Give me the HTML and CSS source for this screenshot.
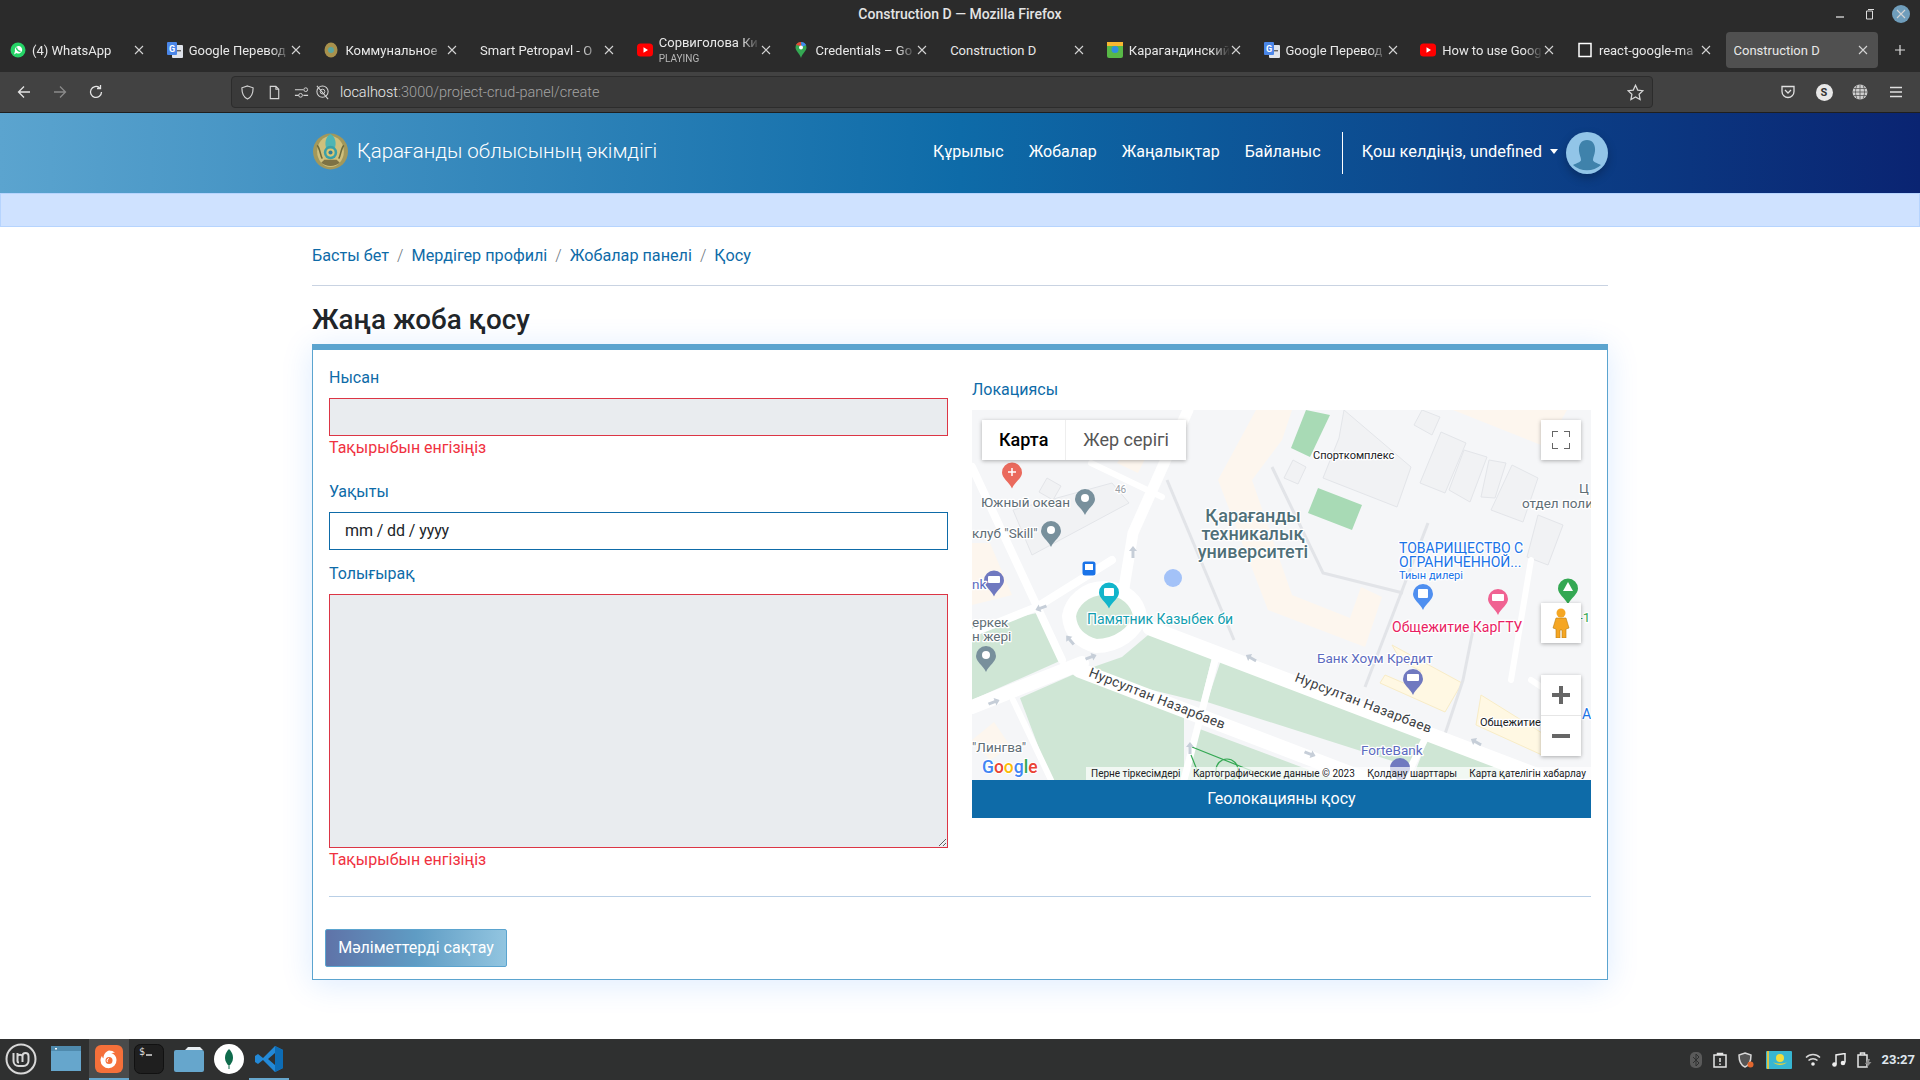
FILE: index.html
```html
<!DOCTYPE html>
<html lang="kk">
<head>
  <meta charset="UTF-8" />
  <title>Construction D</title>
  <link rel="stylesheet" href="styles.css">
</head>
<body>
  <svg class="defs" width="0" height="0">
    <defs>
      <symbol id="x" viewBox="0 0 12 12"><path d="M2 2l8 8M10 2l-8 8" stroke="#d4d4d4" stroke-width="1.1" fill="none"/></symbol>
      <symbol id="gt" viewBox="0 0 16 16"><rect x="5" y="3" width="11" height="13" rx="1" fill="#dfe3ea"/><rect x="0" y="0" width="10" height="13" rx="1" fill="#4a86e8"/><text x="2" y="10" class="fav-letter">G</text><rect x="10" y="8" width="4" height="1.4" fill="#666"/></symbol>
      <symbol id="yt" viewBox="0 0 16 16"><rect y="1.500" width="16" height="13" rx="3.500" fill="#f00"/><path d="M6.500 5.200l4.500 2.800-4.500 2.800z" fill="#fff"/></symbol>
      <symbol id="pin" viewBox="0 0 20 26"><path d="M10 0a10 10 0 0 1 10 10c0 6-7 9-10 16C7 19 0 16 0 10A10 10 0 0 1 10 0z"/></symbol>
      <symbol id="arrow" viewBox="0 0 12 12"><path d="M6 0l4 5H7.500v7h-3V5H2z" fill="#c6ced8"/></symbol>
    </defs>
  </svg>

  <div class="window">
    <div class="titlebar">
      <span class="titlebar-text">Construction D — Mozilla Firefox</span>
      <div class="window-controls">
        <svg width="12" height="12" viewBox="0 0 12 12"><path d="M2 9h8" stroke="#ddd" stroke-width="1.300"/></svg>
        <svg width="12" height="12" viewBox="0 0 12 12"><path d="M3.500 3h6v8h-6zM5 1.500h6" stroke="#ddd" fill="none"/></svg>
        <span class="close-circle"><svg width="12" height="12"><use href="#x"/></svg></span>
      </div>
    </div>

    <div class="tabbar">
      <div class="tab">
        <svg class="fav" viewBox="0 0 16 16"><circle cx="8" cy="8" r="7.500" fill="#25d366"/><path d="M4 12.500l1-3.500a3.700 3.700 0 1 1 1.500 1.900z" fill="#fff"/><path d="M6.500 5.500c0 2 2 4 4 4" stroke="#25d366" stroke-width="1.500" fill="none"/></svg>
        <span class="tab-title">(4) WhatsApp</span>
        <svg class="tab-x"><use href="#x"/></svg>
      </div>
      <div class="tab">
        <svg class="fav"><use href="#gt"/></svg>
        <span class="tab-title">Google Перевод</span>
        <svg class="tab-x"><use href="#x"/></svg>
      </div>
      <div class="tab">
        <svg class="fav" viewBox="0 0 16 16"><ellipse cx="8" cy="8" rx="6.500" ry="7.500" fill="#a8914c"/><circle cx="8" cy="8" r="3" fill="#5ba59f"/></svg>
        <span class="tab-title">Коммунальное</span>
        <svg class="tab-x"><use href="#x"/></svg>
      </div>
      <div class="tab">
        <span class="tab-title">Smart Petropavl - O</span>
        <svg class="tab-x"><use href="#x"/></svg>
      </div>
      <div class="tab">
        <svg class="fav"><use href="#yt"/></svg>
        <span class="tab-title tab-stack">Сорвиголова Ки<small>PLAYING</small></span>
        <svg class="tab-x"><use href="#x"/></svg>
      </div>
      <div class="tab">
        <svg class="fav" viewBox="0 0 16 16"><path d="M8 0a5.500 5.500 0 0 1 5.500 5.500C13.500 9 9.500 11 8 16 6.500 11 2.500 9 2.500 5.500A5.500 5.500 0 0 1 8 0z" fill="#34a853"/><path d="M3 3a5.500 5.500 0 0 1 5-3v4z" fill="#ea4335"/><path d="M8 0a5.500 5.500 0 0 1 5 3l-4 2z" fill="#4285f4"/><circle cx="8" cy="5.500" r="2" fill="#fff"/></svg>
        <span class="tab-title">Credentials – Go</span>
        <svg class="tab-x"><use href="#x"/></svg>
      </div>
      <div class="tab">
        <span class="tab-title no-fade">Construction D</span>
        <svg class="tab-x"><use href="#x"/></svg>
      </div>
      <div class="tab">
        <svg class="fav" viewBox="0 0 16 16"><rect width="16" height="16" rx="2" fill="#58b947"/><rect width="16" height="4" fill="#f7b731"/><circle cx="8" cy="7.500" r="3.500" fill="#2f8fe0"/></svg>
        <span class="tab-title">Карагандинский</span>
        <svg class="tab-x"><use href="#x"/></svg>
      </div>
      <div class="tab">
        <svg class="fav"><use href="#gt"/></svg>
        <span class="tab-title">Google Перевод</span>
        <svg class="tab-x"><use href="#x"/></svg>
      </div>
      <div class="tab">
        <svg class="fav"><use href="#yt"/></svg>
        <span class="tab-title">How to use Goog</span>
        <svg class="tab-x"><use href="#x"/></svg>
      </div>
      <div class="tab">
        <svg class="fav" viewBox="0 0 16 16"><rect x="2" y="1.500" width="12" height="13" fill="none" stroke="#fff" stroke-width="1.500"/></svg>
        <span class="tab-title">react-google-ma</span>
        <svg class="tab-x"><use href="#x"/></svg>
      </div>
      <div class="tab tab-active">
        <span class="tab-title no-fade">Construction D</span>
        <svg class="tab-x"><use href="#x"/></svg>
      </div>
      <svg class="tab-plus" viewBox="0 0 12 12"><path d="M6 1v10M1 6h10" stroke="#ddd" stroke-width="1.200"/></svg>
    </div>

    <div class="toolbar">
      <span class="tool"><svg viewBox="0 0 16 16"><path d="M14 8H2.500M8 2.500L2.500 8 8 13.500" stroke="#e4e4e4" stroke-width="1.300" fill="none"/></svg></span>
      <span class="tool tool-dim"><svg viewBox="0 0 16 16"><path d="M2 8h11.500M8 2.500L13.500 8 8 13.500" stroke="#8a8a8a" stroke-width="1.300" fill="none"/></svg></span>
      <span class="tool"><svg viewBox="0 0 16 16"><path d="M13.500 8A5.500 5.500 0 1 1 11.500 3.700M12.500 1v3.500H9" stroke="#e4e4e4" stroke-width="1.300" fill="none"/></svg></span>
      <div class="urlbar">
        <svg class="url-icon" viewBox="0 0 16 16"><path d="M8 1l6 2c0 6-1.500 10-6 12C3.500 13 2 9 2 3z" stroke="#d6d6d6" stroke-width="1.200" fill="none"/></svg>
        <svg class="url-icon" viewBox="0 0 16 16"><path d="M3.500 1.500h6l3 3v10h-9zM9.500 1.500v3h3" stroke="#d6d6d6" stroke-width="1.200" fill="none"/></svg>
        <svg class="url-icon" viewBox="0 0 16 16"><path d="M1 5h9M1 11h4M10 11h5" stroke="#d6d6d6" stroke-width="1.200"/><circle cx="12.500" cy="5" r="2" stroke="#d6d6d6" fill="none"/><circle cx="7" cy="11" r="2" stroke="#d6d6d6" fill="none"/></svg>
        <svg class="url-icon url-icon-tight" viewBox="0 0 16 16"><circle cx="8" cy="7" r="6" stroke="#d6d6d6" stroke-width="1.100" fill="none"/><circle cx="8" cy="7" r="2.500" stroke="#d6d6d6" fill="none"/><path d="M2 1l12 14" stroke="#d6d6d6" stroke-width="1.100"/></svg>
        <span class="url-text"><b>localhost</b>:3000/project-crud-panel/create</span>
        <svg class="url-star" viewBox="0 0 16 16"><path d="M8 1.200l2.100 4.500 4.900.6-3.600 3.400.9 4.900L8 12.200l-4.300 2.400.9-4.900L1 6.300l4.900-.6z" stroke="#d6d6d6" stroke-width="1.200" fill="none"/></svg>
      </div>
      <span class="tool"><svg viewBox="0 0 16 16"><path d="M2 2.500h12v5a6 6 0 0 1-12 0z" stroke="#e0e0e0" stroke-width="1.300" fill="none"/><path d="M5 6l3 3 3-3" stroke="#e0e0e0" stroke-width="1.300" fill="none"/></svg></span>
      <span class="tool"><span class="s-badge">S</span></span>
      <span class="tool"><svg viewBox="0 0 16 16"><circle cx="8" cy="8" r="7.500" fill="#cfcfcf"/><path d="M8 .5v15M.5 8h15M1.500 4.500h13M1.500 11.500h13M5 1.500c-2 4-2 9 0 13M11 1.500c2 4 2 9 0 13" stroke="#555" fill="none" stroke-width=".8"/></svg></span>
      <span class="tool"><svg viewBox="0 0 16 16"><path d="M2 3.500h12M2 8h12M2 12.500h12" stroke="#e0e0e0" stroke-width="1.300"/></svg></span>
    </div>

    <main class="page">
      <header class="site-header">
        <div class="container header-row">
          <div class="brand">
            <svg class="emblem" viewBox="0 0 36 36">
              <ellipse cx="18" cy="18" rx="17" ry="17.500" fill="#a3985a"/>
              <ellipse cx="18" cy="18" rx="13" ry="15" fill="#cfc07c"/>
              <path d="M18 1c5 3 6 9 4 14h-8C12 10 13 4 18 1z" fill="#4fb5b4"/>
              <circle cx="18" cy="19" r="6.500" fill="#3aa0a8"/>
              <circle cx="18" cy="19" r="4" fill="#d9c673"/>
              <circle cx="18" cy="19" r="2" fill="#2f7f9e"/>
              <path d="M9 29c4 4 14 4 18 0l-3-3H12z" fill="#7d7244"/>
              <path d="M5 12c3 3 3 10 5 13M31 12c-3 3-3 10-5 13" stroke="#6d6a3c" stroke-width="1.500" fill="none"/>
            </svg>
            <span class="brand-name">Қарағанды облысының әкімдігі</span>
          </div>
          <nav class="site-nav">
            <a>Құрылыс</a>
            <a>Жобалар</a>
            <a>Жаңалықтар</a>
            <a>Байланыс</a>
            <span class="nav-divider"></span>
            <a class="nav-user">Қош келдіңіз, undefined</a>
            <span class="caret"></span>
            <span class="avatar">
              <svg viewBox="0 0 42 42"><circle cx="21" cy="21" r="21" fill="#92c5e8"/><path d="M21 8c6 0 8.500 5 8 11-.4 4-2 6-2 9 0 2 4 3 8 5a21 21 0 0 1-28 0c4-2 8-3 8-5 0-3-1.600-5-2-9-.5-6 2-11 8-11z" fill="#3f82ab"/></svg>
            </span>
          </nav>
        </div>
      </header>
      <div class="alert-band"></div>

      <div class="container">
        <div class="breadcrumb">
          <a>Басты бет</a><span class="sep">/</span>
          <a>Мердігер профилі</a><span class="sep">/</span>
          <a>Жобалар панелі</a><span class="sep">/</span>
          <a>Қосу</a>
        </div>
        <h1 class="page-title">Жаңа жоба қосу</h1>

        <section class="card">
          <div class="card-grid">
            <div class="col-form">
              <div class="field field-error">
                <label class="field-label">Нысан</label>
                <input class="control control-invalid" type="text" readonly>
                <p class="error-text">Тақырыбын енгізіңіз</p>
              </div>
              <div class="field">
                <label class="field-label">Уақыты</label>
                <input class="control control-date" type="text" value="mm / dd / yyyy" readonly>
              </div>
              <div class="field-last">
                <label class="field-label">Толығырақ</label>
                <textarea class="control control-invalid control-area" readonly></textarea>
                <p class="error-text">Тақырыбын енгізіңіз</p>
              </div>
            </div>

            <div class="col-map">
              <label class="field-label">Локациясы</label>
              <div class="map">
                <svg class="map-canvas" viewBox="0 0 619 370">
                  <rect width="619" height="370" fill="#f5f6f8"/>
                  <!-- blocks -->
                  <g fill="#fdf6ee">
                    <path d="M284 0L246 70l50 130 97 37 17-50-21-10-11 31-58-23-40-115 30-40 10-30z"/>
                    <path d="M481 0l93 37 21-37z"/>
                    <path d="M145 53l21 10 8-16-20-7z"/>
                    <path d="M0 133h18l22 52-40 10z"/>
                    <path d="M0 330l22-18 17 25-21 13z"/>
                  </g>
                  <g fill="#fff8e3" stroke="#f8ecc6">
                    <path d="M420 235l70 38-17 29-65-29 5-8 28 12 8-16-20-10z"/>
                    <path d="M509 285l61 38v22l-66-30z"/>
                  </g>
                  <g fill="#f1f2f4" stroke="#e3e5e9">
                    <path d="M372 0l67 57-14 40-74-29 16-40z"/>
                    <path d="M469 22l-21 51 25 10 21-50z"/>
                    <path d="M492 40l-15 40 21 12 17-45z"/>
                    <path d="M517 50l-8 37 14 1 11-35z"/>
                    <path d="M540 55l-21 45 32 12 15-44z"/>
                    <path d="M566 105l-11 42 21 8 15-40z"/>
                    <path d="M41 100l19 45 97-52-17-20z"/>
                    <path d="M321 50l-9 18 14 6 8-17z"/>
                    <path d="M75 68l-8 14 14 8 8-14z"/>
                    <path d="M450 0l-8 15 18 10 8-18z"/>
                  </g>
                  <g fill="none" stroke="#e2e4e8" stroke-width="3">
                    <path d="M195 70l67 160"/>
                    <path d="M300 57l51 106 80 20"/>
                    <path d="M456 113l-63 164"/>
                    <path d="M501 220l-10 50-20 60"/>
                  </g>
                  <!-- parks -->
                  <g fill="#cfe6d5">
                    <path d="M0 217l65-14 25 47-90 40z"/>
                    <path d="M182 220l59 23-12 49-122-30 43-15z"/>
                    <path d="M250 247l202 76-13 34-204-65z"/>
                    <path d="M48 288l59-26 105 38v70H79z"/>
                    <path d="M225 318l139 52H215z"/>
                    <path d="M458 323l112 44-130 3z"/>
                  </g>
                  <g fill="#a8dab5">
                    <path d="M334 0l24 5-20 42-19-9z"/>
                    <path d="M346 78l44 17-10 25-44-17z"/>
                  </g>
                  <!-- roads -->
                  <g fill="none" stroke="#fff" stroke-linecap="round">
                    <path d="M216 0L161 123l-11 67" stroke-width="11"/>
                    <path d="M178 218L590 375" stroke-width="15"/>
                    <path d="M107 260L400 372" stroke-width="15"/>
                    <path d="M0 297L110 253" stroke-width="14"/>
                    <path d="M0 223l65-26 75-47" stroke-width="8"/>
                    <path d="M0 57l90 193" stroke-width="8"/>
                    <path d="M245 243l-33 127" stroke-width="7"/>
                    <path d="M456 323l-17 34" stroke-width="7"/>
                    <path d="M41 290l38 80" stroke-width="6"/>
                    <path d="M119 53l71 34" stroke-width="6"/>
                    <path d="M559 150l-20 120" stroke-width="6"/>
                    <path d="M559 270l30 20" stroke-width="6"/>
                  </g>
                  <path d="M132 178c22 0 34 14 36 28-4 16-22 30-44 30-16-4-26-14-27-30 2-14 16-28 35-28z" fill="#cfe6d5" stroke="#fff" stroke-width="14"/>
                  <g fill="none" stroke="#34a853" stroke-width="1.200">
                    <path d="M220 337l60 24M219 345l10 25"/>
                    <circle cx="255" cy="360" r="11"/>
                  </g>
                  <!-- arrows -->
                  <use href="#arrow" x="155" y="136" width="12" height="12"/>
                  <use href="#arrow" x="63" y="192" width="12" height="12" transform="rotate(-110 69 198)"/>
                  <use href="#arrow" x="92" y="224" width="12" height="12" transform="rotate(-40 98 230)"/>
                  <use href="#arrow" x="113" y="241" width="12" height="12" transform="rotate(70 119 247)"/>
                  <use href="#arrow" x="273" y="242" width="12" height="12" transform="rotate(-60 279 248)"/>
                  <use href="#arrow" x="332" y="338" width="12" height="12" transform="rotate(110 338 344)"/>
                  <use href="#arrow" x="498" y="326" width="12" height="12" transform="rotate(-60 504 332)"/>
                  <use href="#arrow" x="212" y="332" width="12" height="12"/>
                  <use href="#arrow" x="16" y="286" width="12" height="12" transform="rotate(70 22 292)"/>
                  <!-- pins -->
                  <g class="pin-red"><use href="#pin" x="30" y="52" width="20" height="27"/></g>
                  <path d="M36 62h8M40 58v8" stroke="#fff" stroke-width="1.500"/>
                  <g class="pin-grey">
                    <use href="#pin" x="103" y="78" width="20" height="28"/>
                    <use href="#pin" x="69" y="110" width="20" height="28"/>
                    <use href="#pin" x="4" y="235" width="20" height="28"/>
                  </g>
                  <g class="pin-purple">
                    <use href="#pin" x="12" y="160" width="20" height="27"/>
                    <use href="#pin" x="431" y="258" width="20" height="28"/>
                    <use href="#pin" x="418" y="347" width="20" height="28"/>
                  </g>
                  <g class="pin-teal"><use href="#pin" x="127" y="172" width="20" height="27"/></g>
                  <g class="pin-blue"><use href="#pin" x="441" y="173" width="20" height="28"/></g>
                  <g class="pin-pink"><use href="#pin" x="516" y="178" width="20" height="28"/></g>
                  <g class="pin-green"><use href="#pin" x="586" y="168" width="20" height="27"/></g>
                  <g fill="#fff">
                    <circle cx="113" cy="88" r="4"/>
                    <circle cx="79" cy="120" r="4"/>
                    <circle cx="14" cy="245" r="4"/>
                    <rect x="132" y="178" width="10" height="8" rx="1"/>
                    <rect x="446" y="179" width="10" height="9" rx="1"/>
                    <rect x="520" y="184" width="12" height="7" rx="1"/>
                    <path d="M596 172l5 9h-10z"/>
                    <rect x="16" y="166" width="12" height="7" rx="1"/>
                    <rect x="435" y="264" width="12" height="7" rx="1"/>
                  </g>
                  <rect x="110.500" y="151.500" width="13" height="14" rx="2.500" fill="#1a73e8"/>
                  <rect x="113" y="154" width="8" height="6" fill="#fff"/>
                  <circle cx="201" cy="168" r="9" fill="#a3c2f8"/>
                  <!-- labels -->
                  <g class="map-label">
                    <text x="341" y="49" class="lbl-black">Спорткомплекс</text>
                    <text x="143" y="83" class="lbl-num">46</text>
                    <text x="9" y="97" class="lbl-grey">Южный океан</text>
                    <text x="0" y="128" class="lbl-grey">клуб "Skill"</text>
                    <text x="0" y="217" class="lbl-grey">еркек</text>
                    <text x="0" y="231" class="lbl-grey">н жері</text>
                    <text x="0" y="342" class="lbl-grey">"Лингва"</text>
                    <text x="607" y="83" class="lbl-grey">Ц</text>
                    <text x="550" y="98" class="lbl-grey">отдел поли</text>
                    <text x="0" y="179" class="lbl-purple">nk</text>
                    <text x="281" y="112" class="lbl-big">Қарағанды</text>
                    <text x="281" y="130" class="lbl-big">техникалық</text>
                    <text x="281" y="148" class="lbl-big">университеті</text>
                    <text x="427" y="143" class="lbl-blue">ТОВАРИЩЕСТВО С</text>
                    <text x="427" y="157" class="lbl-blue">ОГРАНИЧЕННОЙ...</text>
                    <text x="427" y="169" class="lbl-blue-sm">Тиын дилері</text>
                    <text x="420" y="222" class="lbl-pink">Общежитие КарГТУ</text>
                    <text x="115" y="214" class="lbl-teal">Памятник Казыбек би</text>
                    <text x="345" y="253" class="lbl-purple">Банк Хоум Кредит</text>
                    <text x="389" y="345" class="lbl-purple">ForteBank</text>
                    <text x="607" y="212" class="lbl-green">-1</text>
                    <text x="610" y="309" class="lbl-blue">А</text>
                    <text x="508" y="316" class="lbl-black">Общежитие</text>
                    <text class="lbl-road" transform="translate(116 266) rotate(21.500)">Нурсултан Назарбаев</text>
                    <text class="lbl-road" transform="translate(322 271) rotate(21)">Нурсултан Назарбаев</text>
                  </g>
                  <text x="10" y="363" class="g-logo"><tspan fill="#4285f4">G</tspan><tspan fill="#ea4335">o</tspan><tspan fill="#fbbc05">o</tspan><tspan fill="#4285f4">g</tspan><tspan fill="#34a853">l</tspan><tspan fill="#ea4335">e</tspan></text>
                </svg>

                <div class="map-type">
                  <span class="map-type-btn map-type-on">Карта</span>
                  <span class="map-type-btn">Жер серігі</span>
                </div>
                <span class="map-btn map-full">
                  <svg width="18" height="18" viewBox="0 0 18 18"><path d="M0 6V0h6M12 0h6v6M18 12v6h-6M6 18H0v-6" stroke="#666" stroke-width="2" fill="none"/></svg>
                </span>
                <span class="map-btn map-peg">
                  <svg width="18" height="30" viewBox="0 0 18 30"><circle cx="9" cy="5" r="4.500" fill="#f5a623"/><path d="M4 10h10l3 10-3 1v9H10v-8H8v8H4v-9l-3-1z" fill="#f5a623" stroke="#b97c10" stroke-width=".6"/></svg>
                </span>
                <div class="map-zoom">
                  <span class="zoom-btn"><svg width="18" height="18" viewBox="0 0 18 18"><path d="M9 0v18M0 9h18" stroke="#666" stroke-width="4"/></svg></span>
                  <span class="zoom-btn"><svg width="18" height="18" viewBox="0 0 18 18"><path d="M0 9h18" stroke="#666" stroke-width="4"/></svg></span>
                </div>
                <div class="map-footer">
                  <span>Перне тіркесімдері</span>
                  <span>Картографические данные © 2023</span>
                  <span>Қолдану шарттары</span>
                  <span>Карта қателігін хабарлау</span>
                </div>
              </div>
              <button class="geo-btn">Геолокацияны қосу</button>
            </div>
          </div>
          <hr class="card-rule">
          <button class="save-btn">Мәліметтерді сақтау</button>
        </section>
      </div>
    </main>

    <footer class="taskbar">
      <div class="task-left">
        <span class="task-item task-mint">
          <svg width="32" height="32" viewBox="0 0 32 32"><circle cx="16" cy="16" r="14.500" fill="none" stroke="#d8d8d8" stroke-width="2"/><path d="M8.500 10v8a5 5 0 0 0 5 5h5a5 5 0 0 0 5-5v-5a3 3 0 0 0-6 0v6M12.500 10v8c0 1 .5 1.500 1.500 1.500M17.500 13a3 3 0 0 0-5 0" fill="none" stroke="#d8d8d8" stroke-width="2"/></svg>
        </span>
        <span class="task-item">
          <svg width="30" height="25" viewBox="0 0 30 25"><rect width="30" height="25" fill="#66a6cc"/><rect width="30" height="5" fill="#4f8aad"/><rect x="4" y="2" width="2" height="1.500" fill="#fff"/></svg>
        </span>
        <span class="task-item task-on task-fox">
          <svg width="28" height="28" viewBox="0 0 28 28"><rect width="28" height="28" rx="6" fill="#f5703a"/><path d="M14 5.500c2 0 5 .8 6 2.500-1.500-.5-3-.3-3.800.3 3 .7 5.300 3.200 5.300 6.700a8 8 0 0 1-16 .5c0-2 .7-3.500 1.500-4.500.2 1.200.8 2 1.500 2.200C8.500 10 10.500 6.500 14 5.500z" fill="#fff"/><circle cx="14" cy="15.500" r="3.500" fill="#f5703a"/><path d="M14 13.500c-2 .3-2.500 2.500-1.300 3.600" stroke="#fff" fill="none"/></svg>
        </span>
        <span class="task-item">
          <svg width="30" height="30" viewBox="0 0 30 30"><rect x=".5" y=".5" width="29" height="29" rx="6" fill="#1f1f1f" stroke="#111"/><text x="5" y="11" class="term-text">$</text><path d="M12 11h6" stroke="#ddd" stroke-width="1.500"/></svg>
        </span>
        <span class="task-item">
          <svg width="30" height="26" viewBox="0 0 30 26"><path d="M3 4h8l3-3h12l3 3z" fill="#e8eef2"/><rect y="4" width="30" height="22" rx="2" fill="#66a6cc"/></svg>
        </span>
        <span class="task-item">
          <svg width="30" height="30" viewBox="0 0 30 30"><circle cx="15" cy="15" r="15" fill="#fff"/><path d="M15 5c4 4 5 9 3 13-1 2-2 3-3 4-1-1-2-2-3-4-2-4-1-9 3-13z" fill="#0f6b4c"/><path d="M15 22v3" stroke="#0f6b4c"/></svg>
        </span>
        <span class="task-item task-on task-plain">
          <svg width="28" height="28" viewBox="0 0 28 28"><path d="M20 1l8 4v18l-8 4L8 15l-5 4-3-2v-6l3-2 5 4zM20 8l-7 6 7 6z" fill="#2389d7"/><path d="M20 1l8 4v18l-8 4z" fill="#0d6cb5"/></svg>
        </span>
      </div>
      <div class="task-tray">
        <svg width="12" height="16" viewBox="0 0 12 16"><rect width="12" height="16" rx="5" fill="#5a5a5a"/><path d="M3 5l6 6-3 3V2l3 3-6 6" stroke="#2f3030" fill="none"/></svg>
        <svg width="14" height="16" viewBox="0 0 14 16"><path d="M1 3h12v12H1zM4.500 3V1.500h5V3" stroke="#e6e6e6" stroke-width="1.500" fill="none"/><path d="M7 6v4M7 11.500v1.500" stroke="#e6e6e6" stroke-width="1.500"/></svg>
        <svg width="16" height="16" viewBox="0 0 16 16"><path d="M7 1l6 2c0 6-1 10-6 12C2 13 1 9 1 3z" stroke="#d8d8d8" stroke-width="1.500" fill="#555"/><circle cx="12.500" cy="12.500" r="3" fill="#e2662e"/></svg>
        <svg class="tray-flag" width="26" height="18" viewBox="0 0 26 18"><rect width="26" height="18" rx="1" fill="#37b6d2"/><rect x="1" width="2" height="18" fill="#d8c24a"/><circle cx="14" cy="7" r="4" fill="#f2dc3c"/><path d="M7 11c3 4 11 4 14 0-3 2-11 2-14 0z" fill="#e6d23c"/></svg>
        <svg width="16" height="13" viewBox="0 0 16 13"><path d="M1 4.500c4-4 10-4 14 0M3.500 7.500c2.500-2.500 6.500-2.500 9 0" stroke="#d8d8d8" stroke-width="1.500" fill="none"/><circle cx="8" cy="11" r="1.800" fill="#eee"/></svg>
        <svg width="14" height="14" viewBox="0 0 14 14"><path d="M4 11V2l9-1.500V9.500" stroke="#eee" stroke-width="1.500" fill="none"/><circle cx="2.500" cy="11.500" r="2.300" fill="#eee"/><circle cx="11" cy="10" r="2.300" fill="#eee"/></svg>
        <svg width="15" height="16" viewBox="0 0 15 16"><path d="M1 3h9v12H1zM3.500 3V1h4v2" stroke="#e6e6e6" stroke-width="1.500" fill="none"/><path d="M11 7l-3 5h2.500l-1 4 5-6H12l1-3z" fill="#8d8d8d"/></svg>
        <span class="tray-time">23:27</span>
      </div>
    </footer>
  </div>
</body>
</html>
```

FILE: styles.css
```css
* {
  box-sizing: border-box;
}
html, body {
  margin: 0;
  padding: 0;
  height: 100%;
  overflow: hidden;
}
body {
  font-family: Roboto, "Noto Sans", sans-serif;
  background: #fff;
  color: #212529;
}
.defs {
  position: absolute;
}
.window {
  height: 1080px;
  display: flex;
  flex-direction: column;
}

/* firefox chrome */
.titlebar {
  height: 32px;
  background: #2b2b2b;
  display: flex;
  align-items: center;
  justify-content: center;
  position: relative;
  flex-shrink: 0;
}
.titlebar-text {
  color: #e4e4e4;
  font-size: 14px;
  font-weight: 500;
  margin-top: -4px;
}
.window-controls {
  position: absolute;
  right: 10px;
  top: 5px;
  display: flex;
  align-items: center;
  gap: 17px;
}
.close-circle {
  width: 18px;
  height: 18px;
  border-radius: 50%;
  background: #6f9dbb;
  display: flex;
  align-items: center;
  justify-content: center;
}
.tabbar {
  height: 40px;
  background: #2b2b2b;
  display: flex;
  align-items: flex-start;
  gap: 4.700px;
  padding-left: 2px;
  flex-shrink: 0;
  position: relative;
}
.tab {
  width: 152px;
  height: 36px;
  border-radius: 4px;
  display: flex;
  align-items: center;
  padding: 0 9px 0 8px;
  color: #e8e8e8;
  font-size: 13px;
  font-weight: 400;
  flex-shrink: 0;
}
.tab-active {
  background: #505050;
}
.fav {
  width: 16px;
  height: 16px;
  margin-right: 6px;
  flex-shrink: 0;
}
.fav-letter {
  font: 700 9px Roboto, sans-serif;
  fill: #fff;
}
.tab-title {
  flex: 1;
  min-width: 0;
  white-space: nowrap;
  overflow: hidden;
  -webkit-mask-image: linear-gradient(to right, #000 82%, transparent);
  mask-image: linear-gradient(to right, #000 82%, transparent);
}
.no-fade {
  -webkit-mask-image: none;
  mask-image: none;
}
.tab-stack {
  line-height: 16px;
  margin-top: 2px;
}
.tab-stack small {
  display: block;
  font-size: 10px;
  color: #b8b8b8;
}
.tab-x {
  width: 12px;
  height: 12px;
  flex-shrink: 0;
}
.tab-plus {
  width: 12px;
  height: 12px;
  margin: 12px 0 0 12px;
}
.toolbar {
  height: 41px;
  background: #424242;
  border-bottom: 1px solid #1f1f1f;
  display: flex;
  align-items: center;
  padding: 0 6px;
  flex-shrink: 0;
}
.tool {
  width: 36px;
  height: 36px;
  display: flex;
  align-items: center;
  justify-content: center;
  flex-shrink: 0;
}
.tool svg {
  width: 16px;
  height: 16px;
}
.s-badge {
  width: 17px;
  height: 17px;
  border-radius: 50%;
  background: #e8e8e8;
  color: #333;
  font-size: 11px;
  font-weight: 700;
  display: flex;
  align-items: center;
  justify-content: center;
}
.urlbar {
  flex: 1;
  height: 32px;
  margin: 0 117px;
  background: #3a3a3a;
  border: 1px solid #2c2c2c;
  border-radius: 4px;
  display: flex;
  align-items: center;
  padding: 0 8px;
  gap: 12px;
}
.url-icon {
  width: 15px;
  height: 15px;
  flex-shrink: 0;
}
.url-icon-tight {
  margin-left: -6px;
}
.url-text {
  flex: 1;
  font-size: 14.500px;
  font-weight: 300;
  color: #a4a4a4;
  margin-left: -2px;
}
.url-text b {
  font-weight: 300;
  color: #ececec;
}
.url-star {
  width: 17px;
  height: 17px;
}

/* page */
.page {
  flex: 1;
  min-height: 0;
  overflow: hidden;
  background: #fff;
}
.container {
  width: 1320px;
  margin: 0 auto;
  padding: 0 12px;
}
.site-header {
  height: 80px;
  background: linear-gradient(to right, #5ba4cf, #0e6ba8 50%, #0a2472);
  color: #fff;
}
.header-row {
  display: flex;
  align-items: center;
  justify-content: space-between;
  height: 100%;
}
.brand {
  display: flex;
  align-items: center;
  gap: 8px;
  margin-top: -4px;
}
.emblem {
  width: 37px;
  height: 37px;
}
.brand-name {
  font-size: 20.500px;
  font-weight: 300;
}
.site-nav {
  display: flex;
  align-items: center;
  font-size: 16px;
  font-weight: 400;
}
.site-nav a {
  margin-right: 25px;
  margin-top: -4px;
}
.nav-divider {
  width: 1px;
  height: 42px;
  background: #fff;
  margin: 0 19px 0 -4px;
}
.site-nav .nav-user {
  margin-right: 0;
  font-size: 16.400px;
}
.caret {
  border-top: 5px solid #fff;
  border-left: 4px solid transparent;
  border-right: 4px solid transparent;
  margin: -4px 8px 0 8px;
}
.avatar {
  width: 42px;
  height: 42px;
  box-shadow: 0 4px 10px rgba(0, 0, 0, 0.25);
  border-radius: 50%;
}
.avatar svg {
  display: block;
}
.alert-band {
  height: 34px;
  background: #cfe2ff;
  border: 1px solid #b6d4fe;
}
.breadcrumb {
  height: 59px;
  padding-bottom: 2px;
  display: flex;
  align-items: center;
  border-bottom: 1px solid #c9d3e2;
  font-size: 16.200px;
  font-weight: 400;
  color: #0e6ba8;
}
.sep {
  color: #6c757d;
  margin: 0 8px;
  font-weight: 300;
}
.page-title {
  font-size: 27.800px;
  font-weight: 500;
  line-height: 34px;
  margin: 17px 0 7px;
  color: #212529;
}
.card {
  height: 636px;
  border: 1px solid #5ba4cf;
  border-top-width: 6px;
  padding: 16px 16px 0;
  background: #fff;
  box-shadow: 0 4px 30px rgba(13, 110, 253, 0.14);
}
.card-grid {
  display: grid;
  grid-template-columns: 619px 619px;
  gap: 24px;
}
.field-label {
  display: block;
  font-size: 16px;
  font-weight: 400;
  line-height: 24px;
  color: #0e6ba8;
  margin-bottom: 8px;
}
.control {
  display: block;
  width: 100%;
  height: 38px;
  border: 1px solid #0e6ba8;
  padding: 0 15px 2px;
  font: 400 16px Roboto, sans-serif;
  color: #212529;
  background: #fff;
  outline: none;
}
.control-date {
  letter-spacing: -0.1px;
}
.control-invalid {
  background: #e9ecef;
  border-color: #dc3545;
}
.control-area {
  height: 254px;
}
.error-text {
  margin: 0;
  font-size: 16px;
  font-weight: 400;
  line-height: 24px;
  color: #f0323f;
}
.field {
  margin-bottom: 12px;
}
.field-error {
  margin-bottom: 20px;
}
.col-map {
  padding-top: 12px;
}
.col-map .field-label {
  margin-bottom: 8px;
}
.map {
  position: relative;
  height: 370px;
  overflow: hidden;
}
.map-canvas {
  display: block;
  width: 619px;
  height: 370px;
}
.map-label text {
  font-family: Roboto, sans-serif;
  paint-order: stroke;
  stroke: #fff;
  stroke-width: 2.500px;
  stroke-linejoin: round;
  font-size: 13.500px;
}
.map-label .lbl-black {
  fill: #202124;
  font-size: 11px;
}
.map-label .lbl-num {
  fill: #9aa0a6;
  font-size: 10px;
}
.map-label .lbl-grey {
  fill: #5f6e76;
  font-size: 13.500px;
}
.map-label .lbl-purple {
  fill: #5c6bc0;
}
.map-label .lbl-big {
  fill: #4f6f78;
  font-size: 18px;
  font-weight: 500;
  text-anchor: middle;
}
.map-label .lbl-blue {
  fill: #1a73e8;
  font-size: 14px;
}
.map-label .lbl-blue-sm {
  fill: #1a73e8;
  font-size: 11px;
}
.map-label .lbl-pink {
  fill: #e91e63;
  font-size: 14px;
}
.map-label .lbl-teal {
  fill: #129eaf;
  font-size: 14px;
}
.map-label .lbl-green {
  fill: #34a853;
}
.map-label .lbl-road {
  fill: #3c4043;
  font-size: 13.500px;
  letter-spacing: 0.4px;
}
.g-logo {
  font: 500 17.500px Roboto, sans-serif;
  paint-order: stroke;
  stroke: #fff;
  stroke-width: 2px;
}
.pin-red { fill: #ea6a5d; }
.pin-grey { fill: #78909c; }
.pin-purple { fill: #7079c0; }
.pin-teal { fill: #12b5cb; }
.pin-blue { fill: #4f8ff0; }
.pin-pink { fill: #f06292; }
.pin-green { fill: #34a853; }
.map-type {
  position: absolute;
  left: 10px;
  top: 10px;
  height: 40px;
  display: flex;
  background: #fff;
  box-shadow: 0 1px 4px rgba(0, 0, 0, 0.3);
  font-size: 18px;
}
.map-type-btn {
  padding: 0 17px 2px;
  display: flex;
  align-items: center;
  color: #565656;
  border-left: 1px solid #eee;
}
.map-type-on {
  color: #000;
  font-weight: 500;
  border-left: 0;
}
.map-btn {
  position: absolute;
  left: 569px;
  width: 40px;
  height: 40px;
  background: #fff;
  box-shadow: 0 1px 4px rgba(0, 0, 0, 0.3);
  display: flex;
  align-items: center;
  justify-content: center;
}
.map-full {
  top: 10px;
}
.map-peg {
  top: 193px;
}
.map-zoom {
  position: absolute;
  left: 569px;
  top: 265px;
  width: 40px;
  height: 81px;
  background: #fff;
  box-shadow: 0 1px 4px rgba(0, 0, 0, 0.3);
}
.zoom-btn {
  height: 40px;
  display: flex;
  align-items: center;
  justify-content: center;
}
.zoom-btn + .zoom-btn {
  border-top: 1px solid #e6e6e6;
  height: 41px;
}
.map-footer {
  position: absolute;
  right: 0;
  bottom: 0;
  height: 13px;
  width: 505px;
  padding: 0 5px;
  background: rgba(255, 255, 255, 0.7);
  display: flex;
  justify-content: space-between;
  align-items: center;
  font-size: 10px;
  color: #202124;
}
.geo-btn {
  display: block;
  width: 100%;
  height: 38px;
  border: 0;
  padding-bottom: 3px;
  background: #0e6ba8;
  color: #fff;
  font: 400 16px Roboto, sans-serif;
}
.card-rule {
  margin: 24px 0 32px;
  border: 0;
  border-top: 1px solid #b9cfe6;
}
.save-btn {
  display: block;
  margin-left: -4px;
  width: 182px;
  height: 38px;
  padding: 0 0 2px;
  border: 1px solid #5ba4cf;
  border-radius: 2px;
  background: linear-gradient(to right, #5f73a8, #5f9cc4 50%, #92c5e0);
  color: #fff;
  font: 400 16px Roboto, sans-serif;
}

/* desktop panel */
.taskbar {
  height: 41px;
  background: #2f3030;
  display: flex;
  justify-content: space-between;
  align-items: stretch;
  flex-shrink: 0;
}
.task-left {
  display: flex;
}
.task-item {
  width: 40px;
  display: flex;
  align-items: center;
  justify-content: center;
  border-bottom: 2px solid transparent;
}
.task-mint {
  width: 42px;
  margin-right: 4px;
}
.task-fox {
  margin-left: 3px;
}
.task-on {
  border-bottom-color: #66a6cc;
}
.task-on:not(.task-plain) {
  background: #4a4b4b;
}
.term-text {
  font: 400 10px "DejaVu Sans Mono", monospace;
  fill: #ddd;
}
.task-tray {
  display: flex;
  align-items: center;
  gap: 11px;
  padding-right: 5px;
}
.tray-flag {
  margin: 0 2px 0 1px;
}
.tray-time {
  font-size: 13px;
  font-weight: 700;
  color: #dfe7ef;
  margin-left: -1px;
}
```
